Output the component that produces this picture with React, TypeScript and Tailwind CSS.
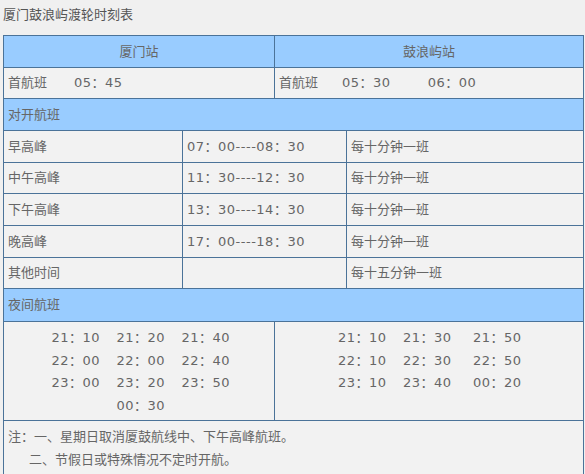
import React from 'react';

const cell = 'border border-[#4b7399] px-[4px] align-middle';
const blue = 'bg-[#99ccff]';
const tm = 'tracking-[0.5px] whitespace-nowrap';

const peaks = [
  { name: '早高峰', time: '07：00----08：30', freq: '每十分钟一班', h: 'h-[32px]' },
  { name: '中午高峰', time: '11：30----12：30', freq: '每十分钟一班', h: 'h-[31px]' },
  { name: '下午高峰', time: '13：30----14：30', freq: '每十分钟一班', h: 'h-[32px]' },
  { name: '晚高峰', time: '17：00----18：30', freq: '每十分钟一班', h: 'h-[32px]' },
  { name: '其他时间', time: '', freq: '每十五分钟一班', h: 'h-[31px]' },
];

const xmNight = [
  ['21：10', '21：20', '21：40'],
  ['22：00', '22：00', '22：40'],
  ['23：00', '23：20', '23：50'],
  ['', '00：30', ''],
];

const glyNight = [
  ['21：10', '21：30', '21：50'],
  ['22：10', '22：30', '22：50'],
  ['23：10', '23：40', '00：20'],
];

export default function App() {
  return (
    <div className="w-[585px] h-[474px] overflow-hidden bg-[#f0f0f0] text-[13px] text-[#666] font-['DejaVu_Sans','Noto_Sans_CJK_SC',sans-serif]">
      <div className="h-[35px] pl-[3px] pt-[5px] leading-[20px] text-[#555]">厦门鼓浪屿渡轮时刻表</div>
      <table className="ml-[3px] w-[580px] table-fixed border-collapse bg-[#f2f2f2]">
        <colgroup>
          <col className="w-[179px]" />
          <col className="w-[92px]" />
          <col className="w-[72px]" />
          <col className="w-[237px]" />
        </colgroup>
        <tbody>
          <tr className="h-[32px]">
            <td colSpan={2} className={`${cell} ${blue} text-center`}>厦门站</td>
            <td colSpan={2} className={`${cell} ${blue} text-center`}>鼓浪屿站</td>
          </tr>
          <tr className="h-[31px]">
            <td colSpan={2} className={cell}>
              <span>首航班</span>
              <span className={`ml-[27px] ${tm}`}>05：45</span>
            </td>
            <td colSpan={2} className={cell}>
              <span>首航班</span>
              <span className={`ml-[24px] ${tm}`}>05：30</span>
              <span className={`ml-[37px] ${tm}`}>06：00</span>
            </td>
          </tr>
          <tr className="h-[32px]">
            <td colSpan={4} className={`${cell} ${blue}`}>对开航班</td>
          </tr>
          {peaks.map((p) => (
            <tr key={p.name} className={p.h}>
              <td className={cell}>{p.name}</td>
              <td colSpan={2} className={`${cell} ${tm}`}>{p.time}</td>
              <td className={cell}>{p.freq}</td>
            </tr>
          ))}
          <tr className="h-[33px]">
            <td colSpan={4} className={`${cell} ${blue}`}>夜间航班</td>
          </tr>
          <tr className="h-[99px]">
            <td colSpan={2} className={`${cell} align-top pt-[5px]`}>
              {xmNight.map((row, i) => (
                <div key={i} className="flex justify-center leading-[22.5px]">
                  {row.map((t, j) => (
                    <span key={j} className={`shrink-0 ${tm} ${j < 2 ? 'w-[65px]' : 'w-[45px]'}`}>{t}</span>
                  ))}
                </div>
              ))}
            </td>
            <td colSpan={2} className={`${cell} align-top pt-[5px]`}>
              {glyNight.map((row, i) => (
                <div key={i} className="flex justify-center leading-[22.5px]">
                  <span className={`shrink-0 w-[65px] ${tm}`}>{row[0]}</span>
                  <span className={`shrink-0 w-[70px] ${tm}`}>{row[1]}</span>
                  <span className={`shrink-0 w-[47px] ${tm}`}>{row[2]}</span>
                </div>
              ))}
            </td>
          </tr>
          <tr className="h-[60px]">
            <td colSpan={4} className={`${cell} align-top pt-[4px] leading-[23px]`}>
              <div>注：一、星期日取消厦鼓航线中、下午高峰航班。</div>
              <div className="pl-[21px]">二、节假日或特殊情况不定时开航。</div>
            </td>
          </tr>
        </tbody>
      </table>
    </div>
  );
}
